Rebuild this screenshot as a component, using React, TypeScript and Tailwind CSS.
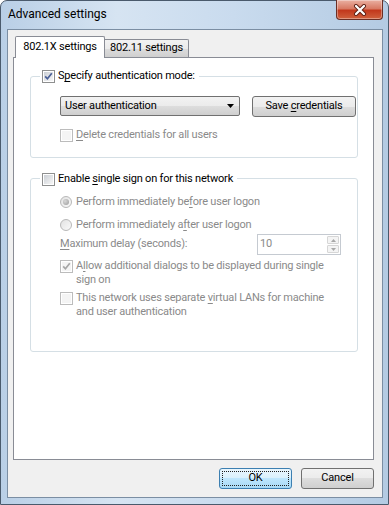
import React from "react";

const font =
  "font-['Roboto','Noto_Sans',sans-serif] text-[11px] tracking-[-0.2px] whitespace-nowrap";
const btnBg =
  "bg-[linear-gradient(#f2f2f2_0%,#ebebeb_50%,#dddddd_50%,#cfcfcf_100%)]";

function U({ children }: { children: React.ReactNode }) {
  return <span className="underline underline-offset-[2px]">{children}</span>;
}

function Check({ checked, disabled }: { checked?: boolean; disabled?: boolean }) {
  return (
    <span
      className={`relative flex h-[13px] w-[13px] shrink-0 items-center justify-center border bg-white ${
        disabled ? "border-[#bcbcbc]" : "border-[#8e8f8f]"
      }`}
    >
      <span
        className={`h-[9px] w-[9px] ${
          disabled
            ? "bg-[#f4f4f4]"
            : "bg-[linear-gradient(135deg,#cbcfd5,#f7f7f7)]"
        }`}
      />
      {checked && (
        <svg className="absolute left-0 top-0" width="11" height="11" viewBox="0 0 11 11">
          <path
            d="M2.2 5.4 L4.4 7.8 L8.8 2.2"
            fill="none"
            stroke={disabled ? "#a6a6a6" : "#4a5f97"}
            strokeWidth="1.7"
          />
        </svg>
      )}
    </span>
  );
}

function Radio({ checked }: { checked?: boolean }) {
  return (
    <span className="flex h-[12px] w-[12px] shrink-0 items-center justify-center rounded-full border border-[#b8b8b8] bg-[linear-gradient(135deg,#e2e2e2,#fafafa)]">
      {checked && (
        <span className="h-[6px] w-[6px] rounded-full bg-[radial-gradient(circle_at_35%_35%,#d8d8d8,#9a9a9a)]" />
      )}
    </span>
  );
}

export default function App() {
  return (
    <div
      className={`${font} flex h-[505px] w-[389px] flex-col rounded-t-[7px] border border-[#4a5a6c] bg-[linear-gradient(90deg,#b9cfe6,#d6e4f2_30%,#c9dbee_60%,#b4cbe3)] pb-[6px] pl-[6px] pr-[5px] text-black`}
    >
      {/* title bar */}
      <div className="relative flex h-[28px] shrink-0 items-center pl-[1px] pb-[2px]">
        <span className="text-[12px] tracking-normal text-black">Advanced settings</span>
        <div className="absolute -top-px right-[0px] flex h-[20px] w-[47px] items-center justify-center rounded-b-[4px] border border-t-0 border-[#6b2f25] bg-[linear-gradient(#eab0a2_0%,#d87a64_45%,#c2381c_55%,#d0613d_100%)] shadow-[inset_0_0_0_1px_rgba(255,255,255,0.35)]">
          <svg width="14" height="12" viewBox="0 0 14 12">
            <path d="M3 2 L11 10 M11 2 L3 10" stroke="#5a1d12" strokeWidth="4" strokeLinecap="round" />
            <path d="M3 2 L11 10 M11 2 L3 10" stroke="#ffffff" strokeWidth="2.3" strokeLinecap="round" />
          </svg>
        </div>
      </div>

      {/* client area */}
      <div className="flex h-[469px] flex-col border border-[#7b8ea3] bg-[#f0f0f0] pt-[6px]">
        {/* tabs */}
        <div className="flex h-[21px] items-end pl-[7px]">
          <div className="relative z-10 -mb-px flex h-[22px] w-[90px] items-center justify-center rounded-t-[2px] border border-b-0 border-[#898c95] bg-white pb-[1px]">
            802.1X settings
          </div>
          <div
            className={`flex h-[18px] w-[84px] items-center justify-center rounded-tr-[2px] border border-b-0 border-l-0 border-[#898c95] ${btnBg}`}
          >
            802.11 settings
          </div>
        </div>

        {/* tab page */}
        <div className="ml-[5px] flex h-[403px] w-[361px] flex-col border border-[#898c95] bg-white">
          {/* group 1 */}
          <div className="ml-[16px] mt-[18px] flex h-[82px] w-[328px] flex-col rounded-[3px] border border-[#d5dfe5]">
            <div className="-mt-[7px] ml-[9px] flex h-[13px] w-fit items-center gap-[3px] bg-white pl-[2px] pr-[4px]">
              <Check checked />
              <span>
                S<U>p</U>ecify authentication mode:
              </span>
            </div>
            <div className="ml-[29px] mt-[13px] flex items-start gap-[12px]">
              <div
                className={`flex h-[20px] w-[180px] items-center justify-between rounded-[2px] border border-[#707070] pl-[4px] pr-[5px] ${btnBg}`}
              >
                <span>User authentication</span>
                <svg width="7" height="4" viewBox="0 0 7 4">
                  <path d="M0 0 H7 L3.5 4 Z" fill="#000" />
                </svg>
              </div>
              <div
                className={`flex h-[21px] w-[104px] items-center justify-center rounded-[3px] border border-[#707070] ${btnBg}`}
              >
                <span>
                  Save <U>c</U>redentials
                </span>
              </div>
            </div>
            <div className="ml-[29px] mt-[10px] flex items-center gap-[3px] text-[#8a8a8a]">
              <Check disabled />
              <span>
                <U>D</U>elete credentials for all users
              </span>
            </div>
          </div>

          {/* group 2 */}
          <div className="ml-[16px] mt-[20px] flex h-[174px] w-[328px] flex-col rounded-[3px] border border-[#d5dfe5]">
            <div className="-mt-[6px] ml-[9px] flex h-[13px] w-fit items-center gap-[3px] bg-white pl-[2px] pr-[4px]">
              <Check />
              <span>
                Enable <U>s</U>ingle sign on for this network
              </span>
            </div>
            <div className="ml-[29px] mt-[9px] flex h-[14px] items-center gap-[4px] text-[#8a8a8a]">
              <Radio checked />
              <span>
                Perform immediately be<U>f</U>ore user logon
              </span>
            </div>
            <div className="ml-[29px] mt-[9px] flex h-[14px] items-center gap-[4px] text-[#8a8a8a]">
              <Radio />
              <span>
                Perform immediately a<U>f</U>ter user logon
              </span>
            </div>
            <div className="ml-[29px] mt-[2px] flex h-[21px] items-center text-[#8a8a8a]">
              <span className="w-[197px]">
                <U>M</U>aximum delay (seconds):
              </span>
              <div className="flex h-[21px] w-[84px] items-stretch border border-[#c5cad1] bg-white">
                <span className="flex flex-1 items-center pl-[2px]">10</span>
                <div className="my-[1px] mr-[1px] flex w-[12px] flex-col gap-px">
                  <div className="flex flex-1 items-center justify-center rounded-[1px] border border-[#d6d6d6] bg-[#f4f4f4]">
                    <svg width="5" height="3" viewBox="0 0 5 3">
                      <path d="M0 3 L2.5 0 L5 3 Z" fill="#a8a8a8" />
                    </svg>
                  </div>
                  <div className="flex flex-1 items-center justify-center rounded-[1px] border border-[#d6d6d6] bg-[#f4f4f4]">
                    <svg width="5" height="3" viewBox="0 0 5 3">
                      <path d="M0 0 L5 0 L2.5 3 Z" fill="#a8a8a8" />
                    </svg>
                  </div>
                </div>
              </div>
            </div>
            <div className="ml-[29px] mt-[4px] flex items-start gap-[3px] leading-[14px] text-[#8a8a8a]">
              <span className="mt-[1px]">
                <Check checked disabled />
              </span>
              <span>
                A<U>l</U>low additional dialogs to be displayed during single
                <br />
                sign on
              </span>
            </div>
            <div className="ml-[29px] mt-[4px] flex items-start gap-[3px] leading-[14px] text-[#8a8a8a]">
              <span className="mt-[1px]">
                <Check disabled />
              </span>
              <span>
                This network uses separate <U>v</U>irtual LANs for machine
                <br />
                and user authentication
              </span>
            </div>
          </div>
        </div>

        {/* buttons */}
        <div className="mt-[8px] flex justify-end gap-[9px] pr-[8px]">
          <div className="relative flex h-[21px] w-[73px] items-center justify-center rounded-[3px] border border-[#3c7fb1] bg-[linear-gradient(#eaf6fd_0%,#d9f0fc_50%,#bee6fd_50%,#a7d9f5_100%)]">
            <span className="absolute inset-[2px] border border-dotted border-[#222]" />
            OK
          </div>
          <div
            className={`flex h-[21px] w-[73px] items-center justify-center rounded-[3px] border border-[#707070] ${btnBg}`}
          >
            Cancel
          </div>
        </div>
      </div>
    </div>
  );
}
